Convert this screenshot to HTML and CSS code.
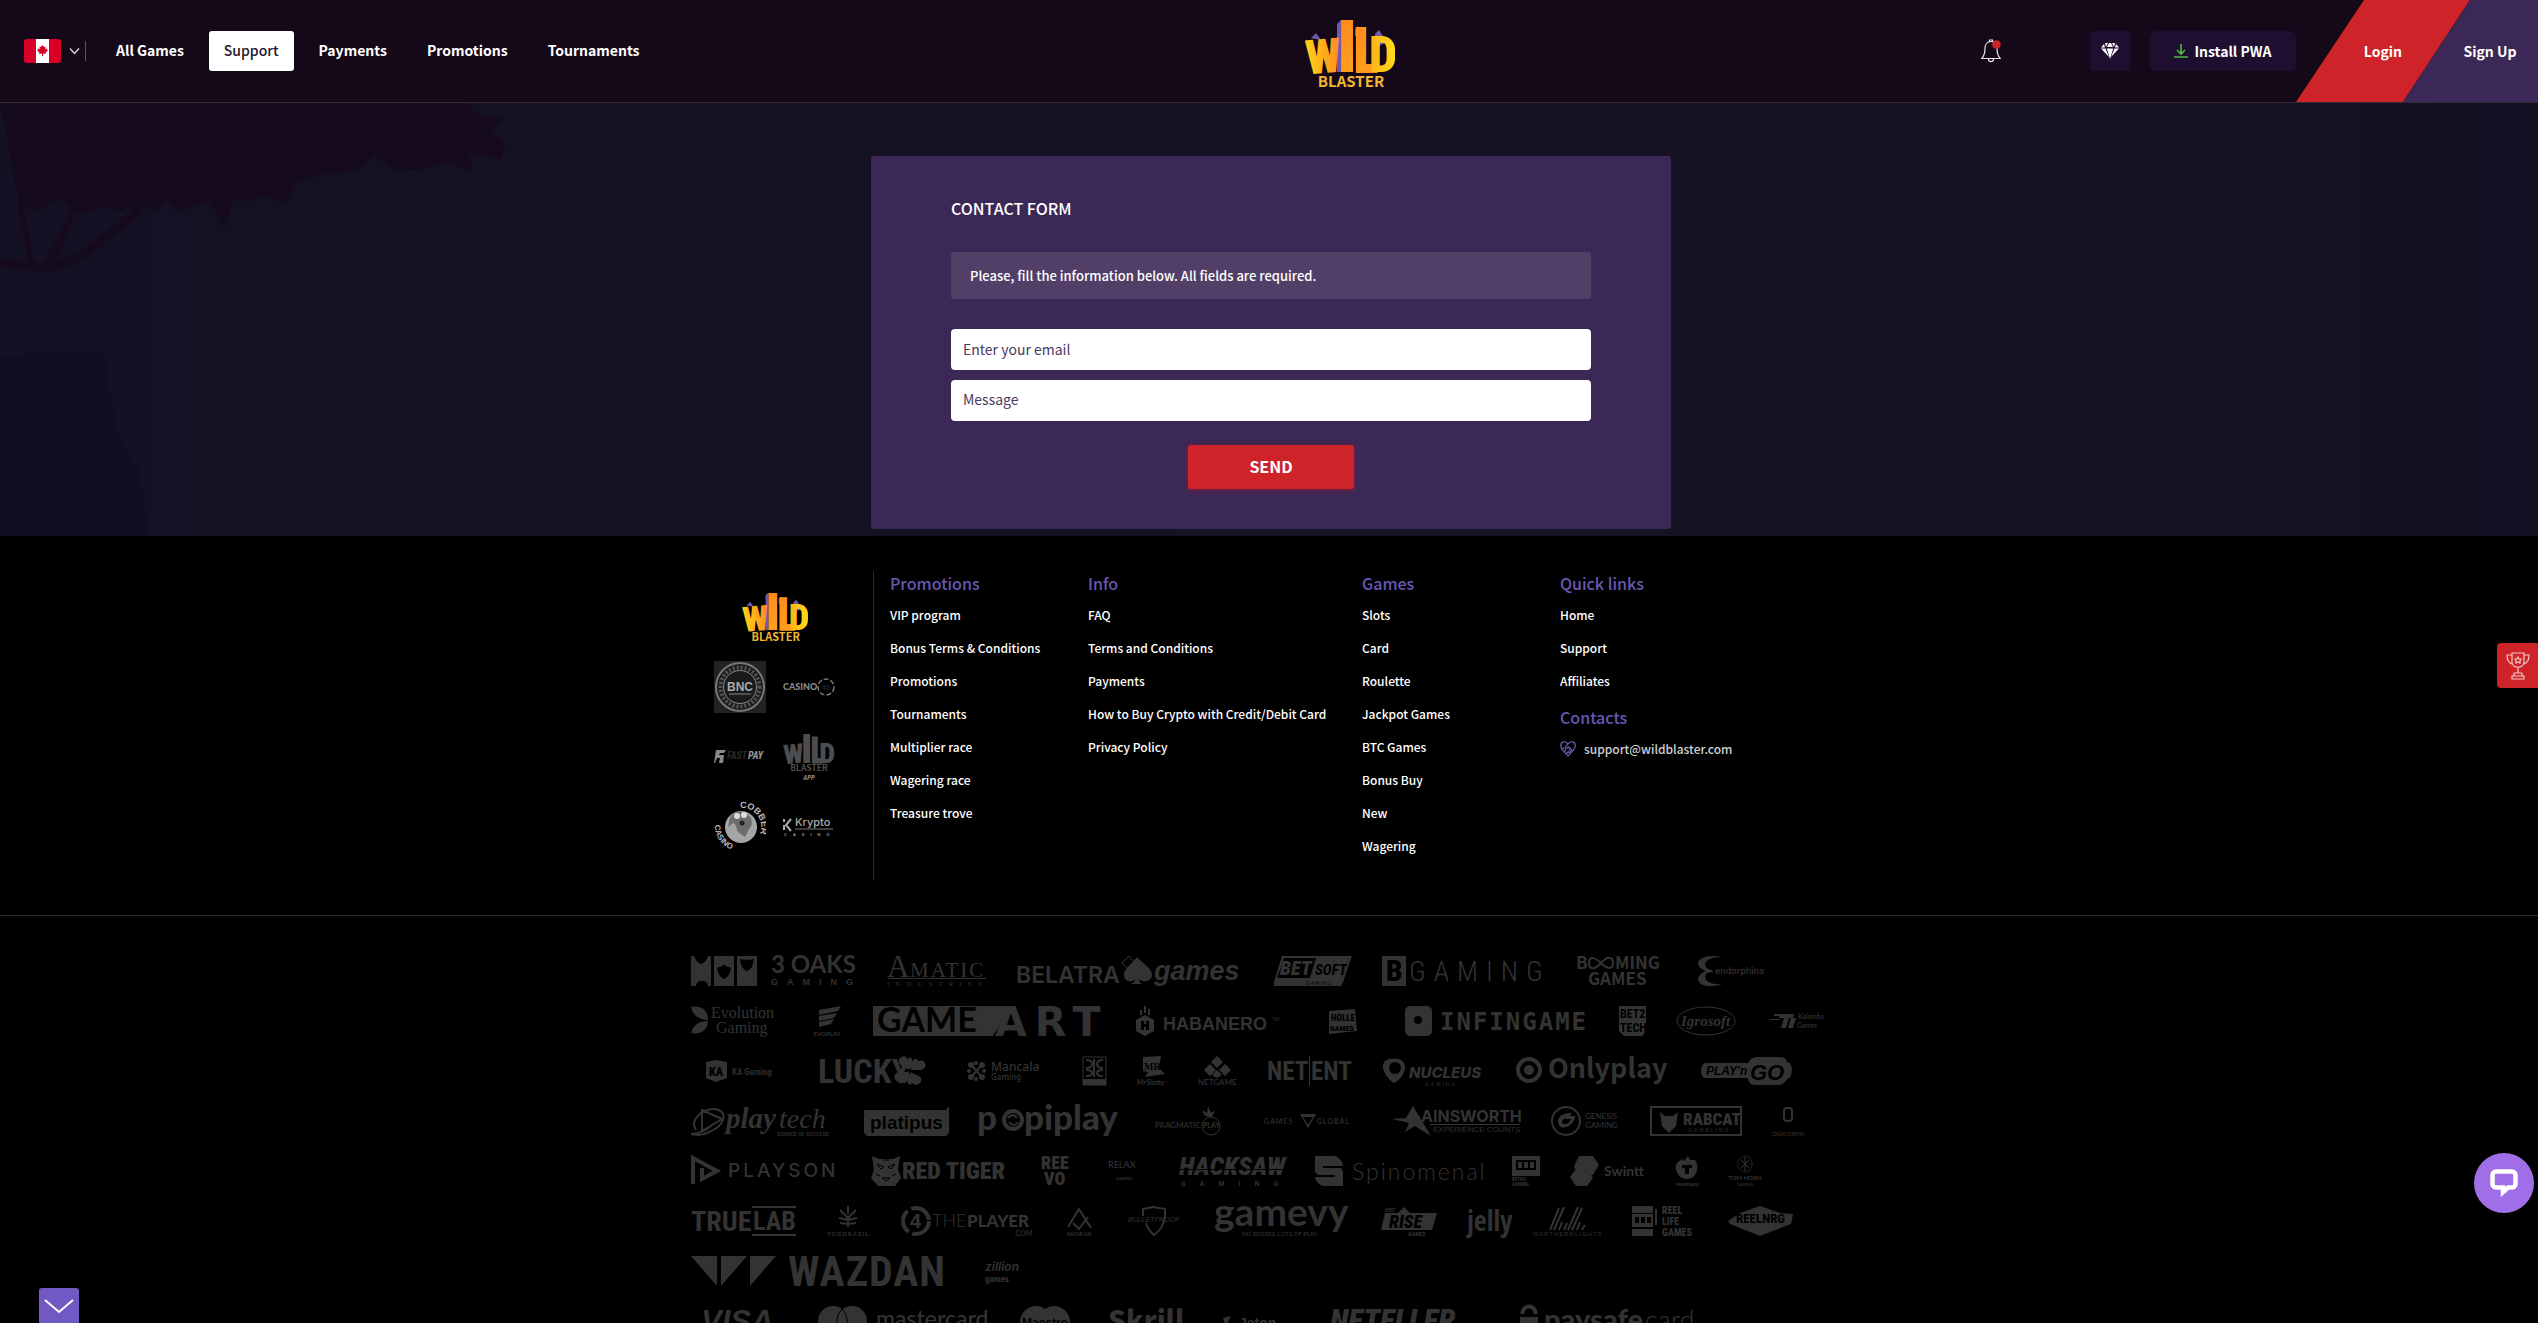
FILE: index.html
```html
<!DOCTYPE html>
<html lang="en">
<head>
<meta charset="utf-8">
<meta name="viewport" content="width=device-width, initial-scale=1">
<title>Support | Wild Blaster</title>
<link rel="stylesheet" href="styles.css">
</head>
<body>
<svg class="defs" aria-hidden="true">
  <defs>
    <linearGradient id="gold" x1="0" x2="1" y1="0" y2="0"><stop offset="0" stop-color="#ffd21a"/><stop offset="1" stop-color="#ff8a1e"/></linearGradient>
    <linearGradient id="amber" x1="0" x2="0" y1="0" y2="1"><stop offset="0" stop-color="#ff8420"/><stop offset="1" stop-color="#ffa51c"/></linearGradient>
    <linearGradient id="sun" x1="0" x2="1" y1="0" y2="0"><stop offset="0" stop-color="#ffae18"/><stop offset="1" stop-color="#ffe01a"/></linearGradient>
    <symbol id="wild" viewBox="0 0 90 74">
      <path d="M6 24l5-5 5 7zM32 10l4-4v52h-4zM70 20l4-4 8 12-12 6zM50 15l3-3v10h-3z" fill="#6d5aa8"/>
      <g class="wild-letters">
        <text x="2" y="59" font-size="48" fill="url(#gold)" transform="rotate(-5 18 59)">W</text>
        <text x="32" y="58" font-size="72" fill="url(#amber)">I</text>
        <text class="tall" x="48" y="58" font-size="62" fill="url(#amber)" stroke="#ff9420" stroke-width="2">L</text>
        <text x="64" y="58" font-size="50" fill="url(#sun)">D</text>
      </g>
      <text class="blaster" x="46" y="73" text-anchor="middle" font-size="15">BLASTER</text>
    </symbol>
  </defs>
</svg>

<div class="page">
  <header class="topbar">
    <button class="country" type="button" aria-label="Country: Canada">
      <svg width="37" height="24" viewBox="0 0 37 24"><rect width="37" height="24" rx="3" fill="#d80027"/><path d="M12 0h13v24H12z" fill="#fff"/><path d="M18.500 6l1.500 2 1.500-.5-.3 2.500 2.300-.5-.6 1.500 1.100.6-2.500 2.200.3 1.200-2.700-.4v2.400h-1.200v-2.400l-2.700.4.3-1.200-2.500-2.200 1.100-.6-.6-1.500 2.300.5-.3-2.500 1.500.5z" fill="#d80027"/></svg>
      <svg width="11" height="8" viewBox="0 0 11 8"><path d="M1 1.500l4.500 5 4.500-5" fill="none" stroke="#ddd" stroke-width="1.300"/></svg>
    </button>
    <nav class="menu">
      <a href="#">All Games</a>
      <a href="#" class="current">Support</a>
      <a href="#">Payments</a>
      <a href="#">Promotions</a>
      <a href="#">Tournaments</a>
    </nav>
    <a class="brand" href="#" aria-label="Wild Blaster"><svg width="90" height="74"><use href="#wild"/></svg></a>
    <div class="tools">
      <button class="bell" type="button" aria-label="Notifications">
        <svg width="20" height="24" viewBox="0 0 20 24"><path d="M8.500 3V1h3v2M10 2.500c-4 0-6 3-6 7C4 15 3 17 .8 19.500h18.400C17 17 16 15 16 9.500c0-4-2-7-6-7zM7.500 20c0 3.500 5 3.500 5 0" fill="none" stroke="#e8e4ea" stroke-width="1.200"/><circle cx="15.500" cy="5.500" r="4.300" fill="#cd2329"/></svg>
      </button>
      <button class="gem" type="button" aria-label="Rewards">
        <svg width="18" height="16" viewBox="0 0 18 16"><path d="M4 0h3L5 4zM8 0h2l2 4H6zM11 0h3l-1 4zM3 1l1 3.500H0zM15 1l3 3.500h-4zM0 5.500h4.500L8 14zM5.800 5.500h6.400L9 16zM13.500 5.500H18L10 14z" fill="#fff"/></svg>
      </button>
      <button class="install" type="button">
        <svg width="14" height="14" viewBox="0 0 14 14"><path d="M7 0v10M3 6l4 4 4-4M0 13h14" fill="none" stroke="#57b947" stroke-width="1.600"/></svg>
        Install PWA
      </button>
      <a class="login" href="#">Login</a>
      <a class="signup" href="#">Sign Up</a>
    </div>
  </header>

  <main class="stage">
    <svg class="scenery" viewBox="0 0 870 433" width="870" height="433" aria-hidden="true">
      <path d="M0 0h465l15 12 22 4-10 12 14 14-6 14-30-6 2 22-20-14-28 8-30 2-20-16-16 16-40 4-20 8-14 20-20-8-10 6-20-2-10 30-14-28-14 4-16 8-14-14-10 14-14-12-20 10-20-4-20 8-22-16-22 12-18-4z" fill="#150b1c"/>
      <path d="M0 160c40 4 60 10 90-14 24-20 46-28 60-60" fill="none" stroke="#150b1c" stroke-width="9"/>
      <path d="M32 164c-2-30-16-50-8-80M46 162c20-40 30-50 38-88M54 158l12-30" fill="none" stroke="#150b1c" stroke-width="6"/>
      <path d="M0 256l32-6 72-2 6 40 10 50 20 30 8 65H0z" fill="#120d21"/>
    </svg>
    <section class="card">
      <h1>CONTACT FORM</h1>
      <p class="hint">Please, fill the information below. All fields are required.</p>
      <form class="contact">
        <input type="email" name="email" placeholder="Enter your email" aria-label="Enter your email">
        <textarea name="message" rows="1" placeholder="Message" aria-label="Message"></textarea>
        <button type="submit">SEND</button>
      </form>
    </section>
  </main>

  <footer class="footer">
    <div class="directory">
      <div class="partners">
        <a href="#" aria-label="Wild Blaster"><svg width="66" height="54"><use href="#wild"/></svg></a>
        <div class="badges">
          <svg width="52" height="52" viewBox="0 0 52 52"><path d="M0 0h52v52H0z" fill="#222"/><circle cx="26" cy="26" r="24" fill="#1c1c1c" stroke="#777" stroke-width="2"/><circle cx="26" cy="26" r="19.500" fill="none" stroke="#555" stroke-width="4" stroke-dasharray="2 2"/><circle cx="26" cy="26" r="16.500" fill="#1a1a1a" stroke="#888"/><text class="sans" x="26" y="30" text-anchor="middle" font-size="12" font-weight="700" fill="#aaa">BNC</text><path d="M15 33h22" stroke="#888"/></svg>
          <svg width="52" height="52" viewBox="0 0 52 52"><text class="lato" x="0" y="29" font-size="9" font-weight="900" fill="#8a8a8a">CASINO</text><circle cx="43" cy="26" r="8" fill="none" stroke="#777" stroke-width="1.500" stroke-dasharray="5 2"/><text class="sans" x="43" y="29" text-anchor="middle" font-size="8" font-weight="700" fill="#222">40</text></svg>
          <svg width="52" height="52" viewBox="0 0 52 52"><path d="M2 20h10l-2 3H6l-1 2h5l-1 8H5l1-5H3l-2 5H0z" fill="#888"/><text class="rc" x="13" y="29" font-size="10" font-style="italic" font-weight="700" fill="#2a2a2a">FAST</text><text class="rc" x="34" y="29" font-size="10" font-style="italic" font-weight="700" fill="#999">PAY</text></svg>
          <svg width="52" height="52" viewBox="0 0 92 92"><g class="wild-letters" fill="#4d4d4d"><text x="2" y="59" font-size="48" transform="rotate(-5 18 59)">W</text><text x="32" y="58" font-size="72">I</text><text class="tall" x="48" y="58" font-size="62" stroke="#4d4d4d" stroke-width="2">L</text><text x="64" y="58" font-size="50">D</text></g><text class="sans7" x="46" y="73" text-anchor="middle" font-size="15" fill="#4d4d4d">BLASTER</text><text class="rc" x="46" y="89" text-anchor="middle" font-size="12" font-style="italic" font-weight="700" fill="#888">APP</text></svg>
          <svg width="52" height="52" viewBox="0 0 52 52"><circle cx="27" cy="28" r="16" fill="#a5a5a5"/><path d="M16 18c4-6 14-8 18-2 6 4 4 12 1 14l-4 8-6-4c-4-6-2-8-6-10l-5 4z" fill="#6d6d6d"/><circle cx="23" cy="17" r="3" fill="#ddd"/><circle cx="30" cy="16" r="3" fill="#ddd"/><circle cx="28" cy="24" r="2.500" fill="#222"/><path id="arcTop" d="M26 9a19 19 0 0 1 16 32" fill="none"/><path id="arcLow" d="M1 26a25 25 0 0 0 18 25" fill="none"/><text class="sans" font-size="9" font-weight="700" fill="#bbb"><textPath href="#arcTop">COBBER</textPath></text><text class="sans" font-size="8" font-weight="700" fill="#bbb"><textPath href="#arcLow">CASINO</textPath></text></svg>
          <svg width="52" height="52" viewBox="0 0 52 52"><path d="M1 20v3M1 26v5M8 20l-5 6 5 6" fill="none" stroke="#aaa" stroke-width="2"/><text class="inter" x="12" y="27" font-size="11" font-weight="500" fill="#aaa">Krypto</text><path d="M12 30h38" stroke="#777"/><text class="sans" x="1" y="37" font-size="4" font-weight="700" fill="#999" letter-spacing="6">CASINO</text></svg>
        </div>
      </div>
      <nav class="links">
        <h2>Promotions</h2>
        <a href="#">VIP program</a><a href="#">Bonus Terms &amp; Conditions</a><a href="#">Promotions</a><a href="#">Tournaments</a><a href="#">Multiplier race</a><a href="#">Wagering race</a><a href="#">Treasure trove</a>
      </nav>
      <nav class="links">
        <h2>Info</h2>
        <a href="#">FAQ</a><a href="#">Terms and Conditions</a><a href="#">Payments</a><a href="#">How to Buy Crypto with Credit/Debit Card</a><a href="#">Privacy Policy</a>
      </nav>
      <nav class="links">
        <h2>Games</h2>
        <a href="#">Slots</a><a href="#">Card</a><a href="#">Roulette</a><a href="#">Jackpot Games</a><a href="#">BTC Games</a><a href="#">Bonus Buy</a><a href="#">New</a><a href="#">Wagering</a>
      </nav>
      <nav class="links">
        <h2>Quick links</h2>
        <a href="#">Home</a><a href="#">Support</a><a href="#">Affiliates</a>
        <h2 class="contacts">Contacts</h2>
        <a class="mail" href="mailto:support@wildblaster.com">
          <svg width="16" height="16" viewBox="0 0 16 16"><path d="M8 3C6-.5 1 0 .8 4.500.6 7 2 8 3 9.500L8 15l5-5.500C14 8 15.500 7 15.200 4.500 15 0 10 -.5 8 3zM8 3L5 6.500c1 1.500 2.500.5 3.500-.5l4.500 4M2 8l2-1M4 10.500L6 8.500M6 13l2-2M9 8.500l2.500 3M8 10.500l2 2" fill="none" stroke="#7a66c4" stroke-width="1.100"/></svg>
          support@wildblaster.com
        </a>
      </nav>
    </div>

    <div class="logo-band">
    <ul class="logos">
      <li><svg width="166" height="30"><path d="M0 0l3 0c2 6 6 8 7 8s6-3 7-8h3v30h-3c0-3-2-5-6-5s-6 2-6 5H0zM23 0h20v30H23zM46 0h20v30H46z"/><path d="M26 12c3-2 5-1 7-4 1 3 4 2 7 4-1 6-3 9-7 11-4-2-6-5-7-11zM49 3c4 1 10 1 14 0-1 7-3 11-7 12-4-1-6-5-7-12z" class="cut"/><text class="mont" x="80" y="17" font-size="24">3 OAKS</text><text class="sans" x="80" y="29" font-size="9" font-weight="700" letter-spacing="9">GAMING</text></svg></li>
      <li><svg width="99" height="30"><text class="serif" x="0" y="21" font-size="31">A</text><text class="serif" x="23" y="21" font-size="21" letter-spacing="2">MATIC</text><path d="M1 22h98v1H1z"/><text class="serif" x="0" y="30" font-size="7" letter-spacing="6">INDUSTRIES</text></svg></li>
      <li><svg width="228" height="30"><text class="inter" x="0" y="27" font-size="23" font-weight="600">BELATRA</text><path d="M121 1c-6 8-13 11-13 18 0 7 8 8 11 4 0 3-2 4-5 5h13c-3-1-4-2-4-5 3 4 13 3 13-4 0-7-9-11-15-18z"/><path d="M113 0l6 7-6 7-7-7z" class="line"/><text class="sans" x="138" y="24" font-size="27" font-weight="700" font-style="italic">games</text></svg></li>
      <li><svg width="78" height="30"><path d="M8 0h70l-9 26H0z"/><path d="M10 2h65l-7 20H3z" class="cut"/><path d="M42 2h33l-7 20H36z"/><text class="rc" x="6" y="19" font-size="20" font-weight="900" font-style="italic">BET</text><text class="rc cut" x="41" y="19" font-size="15" font-weight="700" font-style="italic">SOFT</text><path d="M0 24h70l-3 6H0z"/><text class="sans cut" x="32" y="29" font-size="5" letter-spacing="1">GAMING</text></svg></li>
      <li><svg width="164" height="30"><path d="M0 0h24v30H0z"/><text class="rc cut" x="4" y="25" font-size="29" font-weight="900">B</text><text class="rc" x="27" y="25" font-size="28" font-weight="300" letter-spacing="8">GAMING</text></svg></li>
      <li><svg width="91" height="30"><text class="sans7" x="0" y="13" font-size="17">B</text><path d="M13 7c0-7 6-6 12 0s12 7 12 0-6-7-12 0-12 7-12 0z" class="line2"/><text class="sans7" x="39" y="13" font-size="17">MING</text><text class="sans7" x="12" y="29" font-size="17">GAMES</text></svg></li>
      <li><svg width="73" height="30"><path d="M25 1C12-2 0 2 1 8c1 4 5 5 7 7-2 2-7 4-7 8 0 7 12 9 24 5C12 29 6 24 9 18c1-2 7-1 7-3s-6-1-7-4C6 6 12 1 25 1z"/><text class="inter" x="18" y="18" font-size="9">endorphina</text></svg></li>

      <li><svg width="90" height="30"><path d="M0 1c10-2 17 3 17 13C9 14 2 10 0 1zM0 27c2-8 8-12 17-12 0 9-7 14-17 12z"/><text class="serif" x="20" y="12" font-size="16">Evolution</text><text class="serif" x="25" y="27" font-size="16">Gaming</text></svg></li>
      <li><svg width="32" height="30"><path d="M8 4l22-4-3 5-19 4zM8 10l18-3-3 5-15 3zM8 16l15-3-3 5-12 3z"/><text class="lato" x="16" y="30" text-anchor="middle" font-size="6" font-weight="700">EVOPLAY</text></svg></li>
      <li><svg width="233" height="30"><path d="M0 0h138l-18 30H0z"/><text class="mont cut" x="4" y="26" font-size="34">GAME</text><text class="dejavu" x="122" y="30" font-size="41" letter-spacing="8">ART</text></svg></li>
      <li><svg width="144" height="30"><path d="M0 14l9-5 9 5v11l-9 5-9-5zM8 0h2v7H8zM4 4h2v5H4zM12 3h2v6h-2z"/><path d="M5 15h3v3h2v-3h3v9h-3v-3H8v3H5z" class="cut"/><text class="sans" x="27" y="24" font-size="18" font-weight="700">HABANERO</text><text class="sans" x="136" y="15" font-size="5">TM</text></svg></li>
      <li><svg width="65" height="30"><path d="M19 5l26-2 2 22-28 3z"/><text class="rc cut" x="21" y="15" font-size="9" font-weight="900">HÖLLE</text><text class="rc cut" x="20" y="25" font-size="8" font-weight="900">GAMES</text></svg></li>
      <li><svg width="184" height="30"><rect width="27" height="30" rx="5"/><circle cx="13" cy="14" r="4" class="cut"/><text class="mono" x="35" y="24" font-size="24" letter-spacing="2">INFINGAME</text></svg></li>
      <li><svg width="27" height="30"><path d="M0 0h27v25l-4 5H5l-5-5z"/><text class="rc cut" x="1" y="12" font-size="12" font-weight="700">BET2</text><text class="rc cut" x="1" y="26" font-size="12" font-weight="700">TECH</text></svg></li>
      <li><svg width="62" height="30"><ellipse cx="30" cy="15" rx="29" ry="14" class="line"/><text class="serif" x="5" y="20" font-size="15" font-style="italic" font-weight="700">Igrosoft</text></svg></li>
      <li><svg width="60" height="30"><path d="M6 8h8l-1 2H6zM2 13h9v1H2zM12 8h14l-1 4h-4l-3 10h-5l3-10h-5zM23 12h5l-3 10h-5z"/><text class="lato" x="30" y="13" font-size="7" font-style="italic">Kalamba</text><text class="lato" x="29" y="22" font-size="7" font-style="italic">Games</text></svg></li>

      <li><svg width="97" height="30"><path d="M15 6l10-2 11 2v16l-11 4-10-4z"/><text class="rc cut" x="18" y="20" font-size="12" font-weight="900">KA</text><text class="rc" x="41" y="19" font-size="9">KA Gaming</text></svg></li>
      <li><svg width="106" height="30"><text class="rc" x="0" y="27" font-size="34" font-weight="700">LUCKY</text><g transform="rotate(12 92 15)"><path d="M91 14c-6-2-12-2-12-7s6-7 8-3c3-6 8 0 4 10zM93 14c-3-9 2-16 5-10 4-4 9 0 8 4-1 5-7 4-13 6zM91 16c3 9-2 16-5 10-4 4-9 0-8-4 1-5 7-4 13-6zM93 16c6 2 12 1 12 6s-6 7-8 4c-3 6-8 0-4-10z"/></g></svg></li>
      <li><svg width="98" height="30"><circle cx="17" cy="9" r="3"/><circle cx="28" cy="9" r="3"/><circle cx="17" cy="21" r="3"/><circle cx="28" cy="21" r="3"/><path d="M18 10l10 11M28 9L17 21" class="line2"/><circle cx="22" cy="7" r="2"/><circle cx="22" cy="23" r="2"/><circle cx="15" cy="15" r="2"/><circle cx="30" cy="15" r="2"/><text class="noto" x="37" y="15" font-size="12">Mancala</text><text class="noto" x="37" y="24" font-size="8">Gaming</text></svg></li>
      <li><svg width="25" height="30"><path d="M1 1h23v28H1z" class="line"/><path d="M4 4c8 0 8 8 0 8M21 4c-8 0-8 8 0 8M4 20c8 0 8-6 0-6M21 20c-8 0-8-6 0-6M12 3v18" class="line2"/><path d="M1 23h23v6H1z"/></svg></li>
      <li><svg width="31" height="30"><path d="M6 1l18-1-2 12 6 6-20 3 3-5-5-1z"/><text class="serif cut" x="7" y="14" font-size="10" font-weight="700">MR</text><text class="lato" x="0" y="29" font-size="7" font-weight="700">MrSlotty</text></svg></li>
      <li><svg width="39" height="30"><path d="M19 0l6 6-6 6-6-6zM12 8l6 6-6 6-6-6zM27 8l6 6-6 6-6-6zM19 14l5 5-5 3-5-3z"/><text class="lato" x="0" y="29" font-size="8">NETGAME</text></svg></li>
      <li><svg width="85" height="30"><text class="rc" x="0" y="24" font-size="25" font-weight="700">NET</text><path d="M42 0h1v30h-1z"/><text class="rc" x="44" y="24" font-size="25" font-weight="700">ENT</text></svg></li>
      <li><svg width="104" height="30"><path d="M1 9C2 3 9 2 13 3c5-1 11 3 10 10-2 8-7 12-11 14C7 24 0 16 1 9z"/><circle cx="13" cy="12" r="6" class="cut"/><text class="inter" x="27" y="22" font-size="15" font-weight="800" font-style="italic">NUCLEUS</text><text class="sans" x="43" y="30" font-size="5" letter-spacing="2">GAMING</text></svg></li>
      <li><svg width="155" height="30"><circle cx="13" cy="14" r="11" class="line3"/><circle cx="13" cy="14" r="5"/><text class="sans7" x="32" y="22" font-size="27">Onlyplay</text></svg></li>
      <li><svg width="100" height="30"><path d="M5 7h42c2-4 5-6 9-6h22c6 0 8 3 8 5 7 0 6 17 0 17-2 4-5 6-9 6H54c-4 0-7-3-7-7H5c-7 0-6-15 0-15z"/><text class="sans cut" x="5" y="19" font-size="12" font-weight="700" font-style="italic">PLAY'n</text><text class="sans cut" x="49" y="24" font-size="22" font-weight="700" font-style="italic">GO</text></svg></li>

      <li><svg width="143" height="30"><path d="M11 4l20 9-20 12zM5 24C-2 14 12 2 24 3 38 5 34 20 18 26c-8 4-12 3-18 2 8 0 18-5 22-10" class="line2"/><text class="serif" x="35" y="22" font-size="29" font-weight="700" font-style="italic">play</text><text class="serif" x="88" y="22" font-size="28" font-style="italic">tech</text><text class="rc" x="86" y="30" font-size="6">SOURCE OF SUCCESS</text></svg></li>
      <li><svg width="85" height="30"><path d="M0 4h82l3-4v27l-3 3H3l-3-3z"/><text class="sans cut" x="6" y="23" font-size="19" font-weight="700">platipus</text></svg></li>
      <li><svg width="146" height="30"><text class="mont heavy" x="-2" y="24" font-size="35">p</text><circle cx="34" cy="14" r="9" class="line3"/><path d="M29 12c4-4 6-4 9 0M39 16c-3 4-6 4-9 0" class="line2"/><text class="mont heavy" x="45" y="24" font-size="35">piplay</text></svg></li>
      <li><svg width="70" height="30"><text class="lato" x="0" y="22" font-size="8">PRAGMATIC</text><circle cx="56" cy="20" r="9" class="line"/><path d="M50 10l-3-6 5 3 1-7 3 7 4-3-3 7z"/><text class="lato" x="48" y="22" font-size="7" font-weight="700">PLAY</text></svg></li>
      <li><svg width="107" height="30"><text class="lato" x="9" y="18" font-size="7" letter-spacing="1">GAMES</text><path d="M45 8h16l-8 14zM48 11l5 8 5-8z" fill-rule="evenodd"/><text class="lato" x="62" y="18" font-size="7" letter-spacing="1">GLOBAL</text></svg></li>
      <li><svg width="129" height="30"><path d="M0 13l14-1 7-12 18 30-16-10-10 6 4-9z"/><text class="inter" x="29" y="16" font-size="16" font-weight="700">AINSWORTH</text><path d="M38 18h90v1H38z"/><text class="sans" x="41" y="26" font-size="8">EXPERIENCE COUNTS</text></svg></li>
      <li><svg width="69" height="30"><circle cx="15" cy="15" r="14" class="line2"/><path d="M7 16c0-6 5-9 14-9l-4 5c-4 0-6 2-6 5 3 3 8 0 9-4h-6l3-3h7c0 10-16 17-17 6z"/><text class="lato" x="34" y="13" font-size="8">GENESIS</text><text class="lato" x="34" y="22" font-size="8">GAMING</text></svg></li>
      <li><svg width="92" height="30"><path d="M1 1h90v28H1z" class="line2"/><path d="M10 6l5 4h8l5-4-2 14-7 7-7-7z"/><text class="rc" x="33" y="19" font-size="17" font-weight="900">RABCAT</text><text class="sans" x="38" y="26" font-size="5" letter-spacing="2">GAMBLING</text></svg></li>
      <li><svg width="33" height="30"><rect x="12" y="2" width="8" height="13" rx="3" class="line2"/><text class="lato" x="0" y="30" font-size="6">QUICKSPIN</text></svg></li>

      <li><svg width="150" height="30"><path d="M2 28V2l24 13-15 8V12" class="line3"/><text class="inter" x="37" y="21" font-size="19" letter-spacing="3">PLAYSON</text></svg></li>
      <li><svg width="140" height="30"><path d="M1 0l7 3h14l7-3-2 14 3 8-6 8H7l-7-8 3-8z"/><path d="M6 8l7 3-3 2zM24 8l-7 3 3 2zM11 22h8l-4 3zM12 4h6M5 18l4 2M25 18l-4 2" class="cutline"/><text class="rc" x="31" y="23" font-size="24" font-weight="900">RED TIGER</text></svg></li>
      <li><svg width="31" height="30"><text class="rc" x="0" y="13" font-size="18" font-weight="900">REE</text><text class="rc" x="3" y="29" font-size="18" font-weight="900">VO</text></svg></li>
      <li><svg width="47" height="30"><text class="lato" x="6" y="12" font-size="9">RELAX</text><text class="sans" x="14" y="24" font-size="4" font-weight="700">GAMING</text></svg></li>
      <li><svg width="106" height="30"><text class="rc" x="0" y="19" font-size="26" font-weight="900" font-style="italic">HACKSAW</text><path d="M0 13h106v1H0z" class="cut"/><text class="rc" x="2" y="30" font-size="8" letter-spacing="14">GAMING</text></svg></li>
      <li><svg width="167" height="30"><path d="M0 0h20c5 2 8 6 8 10H8v2h18l2 3v15H8c-5-2-8-6-8-9h20v-2H3l-3-3z"/><text class="lato" x="37" y="24" font-size="23" font-weight="300" letter-spacing="2">Spinomenal</text></svg></li>
      <li><svg width="28" height="30"><path d="M0 0h28v20H0z"/><path d="M4 4h20v10H4z" class="cut"/><path d="M6 6h4v6H6zM12 6h4v6h-4zM18 6h4v6h-4z"/><text class="rc" x="0" y="25" font-size="5" font-weight="700">RETRO</text><text class="rc" x="0" y="30" font-size="5" font-weight="700">GAMING</text></svg></li>
      <li><svg width="76" height="30"><path d="M9 0h14l6 9-6 10h-2l2 3-6 8H6l-6-9 6-8h-1l-1-3z"/><text class="lato" x="34" y="20" font-size="14" font-weight="700">Swintt</text></svg></li>
      <li><svg width="22" height="30"><path d="M6 3l2 2 4-5 2 4 5 0c5 6 2 19-8 19S-3 10 2 6z"/><path d="M6 9h10v3h-3v6H9v-6H6z" class="cut"/><text class="rc" x="11" y="30" text-anchor="middle" font-size="4" font-weight="700">THUNDERKICK</text></svg></li>
      <li><svg width="35" height="30"><ellipse cx="17" cy="8" rx="7" ry="8" stroke-dasharray="2 1" class="line"/><path d="M13 4l8 8M13 12l8-8M17 1v14" class="line"/><text class="lato" x="17" y="24" text-anchor="middle" font-size="6" font-weight="700">TOM HORN</text><text class="lato" x="17" y="30" text-anchor="middle" font-size="4">GAMING</text></svg></li>

      <li><svg width="105" height="30"><text class="rc" x="0" y="25" font-size="28" font-weight="700">TRUE</text><text class="rc" x="62" y="24" font-size="26" font-weight="700">LAB</text><path d="M61 0h44v2H61zM61 28h44v2H61z"/></svg></li>
      <li><svg width="45" height="30"><path d="M22 21v-9M22 12l-8-8M22 12l8-8M22 14l-9-2M22 14l9-2M22 8V0M22 18l-8-1M22 18l8-1" class="line2"/><text class="lato" x="22" y="30" text-anchor="middle" font-size="6" font-weight="700" letter-spacing="1">YGGDRASIL</text></svg></li>
      <li><svg width="133" height="30"><circle cx="15" cy="15" r="13" class="line3" stroke-dasharray="24 4"/><text class="sans" x="9" y="22" font-size="20" font-weight="700">4</text><text class="lato" x="31" y="21" font-size="18" font-weight="300">THE</text><text class="lato" x="66" y="21" font-size="17" font-weight="900">PLAYER</text><text class="lato" x="113" y="30" font-size="7">.COM</text></svg></li>
      <li><svg width="34" height="30"><path d="M4 21L15 3l12 19M9 17l6 6 9-12" class="line2"/><text class="rc" x="15" y="30" text-anchor="middle" font-size="5">AVATAR LUX</text></svg></li>
      <li><svg width="56" height="30"><path d="M15 10V3l10-2 12 2v7c-1 9-5 15-11 19-5-4-7-8-8-12" class="line2"/><text class="sans" x="0" y="16" font-size="7" font-style="italic">BULLETPROOF</text></svg></li>
      <li><svg width="137" height="30"><text class="mont" x="0" y="20" font-size="39">gamevy</text><text class="lato" x="28" y="30" font-size="6">NO BOSSES. LOTS OF PLAY.</text></svg></li>
      <li><svg width="56" height="30"><path d="M4 7h13l6-6 6 6h27l-5 17H0z"/><text class="rc cut" x="8" y="22" font-size="18" font-weight="900" font-style="italic">RISE</text><text class="rc" x="4" y="6" font-size="6" font-weight="700" font-style="italic">HOT</text><text class="rc" x="27" y="30" font-size="6" font-weight="700" font-style="italic">GAMES</text></svg></li>
      <li><svg width="36" height="30"><text class="osc" x="0" y="25" font-size="28" font-weight="700">jelly</text></svg></li>
      <li><svg width="69" height="30"><path d="M17 24L26 2M21 24L31 1M26 24l3-8M31 24l3-7M35 24L45 1M39 24L49 2M44 24l3-8M49 24l3-5" class="line2"/><text class="sans" x="0" y="30" font-size="6" letter-spacing="1">NORTHERNLIGHTS</text></svg></li>
      <li><svg width="66" height="30"><path d="M0 0h21v7H0zM0 8h21v13H0zM0 23h21v7H0zM23 3h2v16h-2z"/><path d="M3 11h4v6H3zM9 11h4v6H9zM15 11h4v6h-4z" class="cut"/><text class="rc" x="30" y="8" font-size="10" font-weight="900">REEL</text><text class="rc" x="30" y="19" font-size="10" font-weight="900">LIFE</text><text class="rc" x="30" y="30" font-size="10" font-weight="900">GAMES</text></svg></li>
      <li><svg width="65" height="30"><path d="M0 15l12-8 20-7 20 7 13 1-2 10-31 12L2 18z"/><text class="rc cut" x="8" y="17" font-size="13" font-weight="700">REELNRG</text></svg></li>

      <li><svg width="264" height="30"><path d="M0 0h26v30zM30 0h26L30 30zM59 0h26L59 30z"/><text class="rc" x="97" y="30" font-size="42" font-weight="700" letter-spacing="1">WAZDAN</text></svg></li>
      <li><svg width="40" height="30"><text class="inter" x="0" y="15" font-size="12" font-weight="600" font-style="italic">zillion</text><text class="rc" x="0" y="26" font-size="9" font-weight="700">games</text></svg></li>
    </ul>
    <ul class="logos">
      <li><svg width="97" height="30"><text class="sans" x="10" y="26" font-size="31" font-weight="700" font-style="italic">VISA</text></svg></li>
      <li><svg width="170" height="30"><circle cx="15" cy="15" r="15"/><circle cx="34" cy="15" r="15"/><path d="M24 3c-7 8-7 16 0 24 7-8 7-16 0-24z" class="cutline"/><text class="lato" x="58" y="21" font-size="23">mastercard</text></svg></li>
      <li><svg width="54" height="30"><circle cx="18" cy="16" r="16"/><circle cx="36" cy="16" r="16"/><text class="sans cut" x="4" y="21" font-size="12" font-weight="700">Maestro</text></svg></li>
      <li><svg width="85" height="30"><text class="sans7 black" x="6" y="25" font-size="28">Skrill</text></svg></li>
      <li><svg width="63" height="30"><path d="M6 12l8-2-3 6 2 6H4l4-4z"/><text class="sans" x="22" y="22" font-size="14" font-weight="700">Jeton</text></svg></li>
      <li><svg width="180" height="30"><text class="rc" x="20" y="25" font-size="31" font-weight="900" font-style="italic">NETELLER</text></svg></li>
      <li><svg width="177" height="30"><path d="M2 8c2-10 12-10 14 0" class="line3"/><path d="M0 11h18v19H0z"/><text class="mont heavy" x="24" y="24" font-size="29">paysafe</text><text class="lato" x="125" y="24" font-size="27" font-weight="300">card</text></svg></li>
    </ul>
    </div>
  </footer>
</div>

<button class="trophy" type="button" aria-label="Tournaments">
  <svg width="24" height="28" viewBox="0 0 24 28"><path d="M6 1h12v9c0 7-12 7-12 0zM6 3H1c0 6 2 8 5 9M18 3h5c0 6-2 8-5 9M12 15v6M8 21h8v3H8zM6 24h12v3H6zM12 5l1 2h2l-1 2v2l-2-1-2 1V9L9 7h2z" fill="none" stroke="#f3c9ca" stroke-width="1.200"/></svg>
</button>
<button class="chat" type="button" aria-label="Open chat">
  <svg width="28" height="28" viewBox="0 0 28 28"><path d="M6 2.500h16a3.500 3.500 0 0 1 3.500 3.500v9a3.500 3.500 0 0 1-3.500 3.500h-4l-5 4.500v-4.500H6A3.500 3.500 0 0 1 2.500 15V6A3.500 3.500 0 0 1 6 2.500z" fill="none" stroke="#fff" stroke-width="4.500"/></svg>
</button>
<button class="down" type="button" aria-label="Scroll down">
  <svg width="30" height="16" viewBox="0 0 30 16"><path d="M1 2l14 12L29 2" fill="none" stroke="#fff" stroke-width="2"/></svg>
</button>
</body>
</html>
```
FILE: styles.css
```css
* { box-sizing: border-box; }
body {
  margin: 0;
  background: #000;
  color: #fff;
  font: 500 14px/20px "Noto Sans CJK SC", "Noto Sans", sans-serif;
}
a { color: inherit; text-decoration: none; }
button, input, textarea { font: inherit; border: 0; margin: 0; }
button { color: inherit; cursor: pointer; padding: 0; background: none; }
svg { display: block; flex: none; }
.defs { position: absolute; width: 0; height: 0; }

.page { height: 100vh; overflow: hidden auto; scrollbar-width: none; }

/* Header */
.topbar {
  display: flex;
  align-items: center;
  height: 103px;
  padding-left: 24px;
  background: #150818;
  border-bottom: 1px solid #332a38;
}
.country {
  display: flex;
  align-items: center;
  gap: 8px;
  height: 20px;
  padding-right: 5px;
  border-right: 1px solid #5c5460;
}
.menu { display: flex; gap: 10px; margin-left: 15px; }
.menu a { padding: 0 15px 2px; line-height: 38px; font-weight: 700; border-radius: 3px; }
.menu .current { background: #fff; color: #20162c; font-weight: 500; }
.brand { margin-left: auto; padding-left: 64px; }
.tools { display: flex; align-items: center; margin-left: auto; font-weight: 700; }
.bell { margin-right: 89px; }
.gem, .install {
  display: flex;
  align-items: center;
  justify-content: center;
  height: 40px;
  background: #1e0f30;
}
.gem { width: 40px; margin-right: 20px; border-radius: 3px; }
.install { width: 146px; gap: 6px; border-radius: 6px; font-weight: 700; }
.login, .signup { line-height: 102px; text-align: center; }
.login {
  width: 174px;
  background: #cd2329;
  clip-path: polygon(68px 0, 100% 0, 107px 100%, 0 100%);
}
.signup {
  width: 135px;
  margin-left: -67px;
  padding-left: 39px;
  background: #3c2856;
  clip-path: polygon(67px 0, 100% 0, 100% 100%, 0 100%);
}

/* Contact form */
.stage {
  position: relative;
  padding: 53px 20px 7px 24px;
  background: linear-gradient(90deg, #131123, #151223 40%, #161423 75%, #141023);
}
.scenery { position: absolute; left: 0; top: 0; }
.card {
  position: relative;
  max-width: 800px;
  margin: 0 auto;
  padding: 42px 80px 40px;
  background: #3c2856;
  border-radius: 3px;
}
.card h1 { margin: 0 0 34px; font-size: 16px; line-height: 20px; font-weight: 500; }
.hint {
  margin: 0 0 30px;
  padding: 0 19px;
  font-size: 13px;
  line-height: 47px;
  background: #513f68;
  border-radius: 3px;
}
.contact { display: flex; flex-direction: column; gap: 10px; }
.contact input, .contact textarea {
  height: 41px;
  padding: 9px 12px 11px;
  font-weight: 400;
  background: #fff;
  border-radius: 4px;
  resize: none;
  overflow: hidden;
}
.contact ::placeholder { color: #4a3a60; opacity: 1; }
.contact button {
  align-self: center;
  width: 166px;
  height: 44px;
  margin-top: 14px;
  padding-bottom: 2px;
  font-size: 16px;
  font-weight: 700;
  background: #cd2329;
  border-radius: 3px;
  box-shadow: 0 1px 4px #8c1d33;
}

/* Footer directory */
.footer { background: #000; }
.directory {
  display: grid;
  grid-template-columns: 198px 198px 274px 198px 1fr;
  max-width: 1186px;
  margin: 0 auto;
  padding: 35px 0;
}
.partners {
  display: flex;
  flex-direction: column;
  align-items: center;
  gap: 19px;
  min-height: 309px;
  padding-top: 17px;
  border-right: 1px solid #2b2b2b;
}
.badges { display: grid; grid-template-columns: 52px 52px; gap: 17px; }
.links {
  display: flex;
  flex-direction: column;
  align-items: flex-start;
  padding-left: 16px;
  font-size: 12px;
  line-height: 33px;
}
.links h2 { margin: 0; padding-bottom: 2px; font-size: 16px; line-height: 25px; font-weight: 500; color: #6a57b5; }
.links .contacts { margin-top: 8px; }
.mail { display: flex; align-items: center; gap: 8px; color: #d0d0d0; }

/* Provider and payment logos */
.logo-band { padding-top: 40px; border-top: 1px solid #2b2b2b; }
.logos {
  display: flex;
  flex-wrap: wrap;
  gap: 20px 30px;
  max-width: 1156px;
  margin: 0 auto;
  padding: 0 0 20px;
  list-style: none;
}
.logos svg { fill: #333; overflow: visible; }
.logos .cut { fill: #000; }
.logos .cutline { fill: none; stroke: #000; stroke-width: 1px; }
.logos .line { fill: none; stroke: #333; stroke-width: 1px; }
.logos .line2 { fill: none; stroke: #333; stroke-width: 2px; }
.logos .line3 { fill: none; stroke: #333; stroke-width: 4px; }
.sans { font-family: "Liberation Sans", sans-serif; }
.sans7 { font-family: "Noto Sans CJK SC", sans-serif; font-weight: 700; }
.serif { font-family: "Liberation Serif", serif; }
.lato { font-family: Lato, sans-serif; }
.mont { font-family: Lato, sans-serif; font-weight: 700; }
.heavy, .black { font-weight: 900; }
.inter { font-family: Inter, sans-serif; }
.noto { font-family: "Noto Sans", sans-serif; }
.mono { font-family: "DejaVu Sans Mono", monospace; font-weight: 700; }
.dejavu { font-family: "DejaVu Sans", sans-serif; font-weight: 700; }
.rc { font-family: "Roboto Condensed", Roboto, sans-serif; }
.osc, .wild-letters .tall { font-family: "Open Sans Condensed", "Open Sans", sans-serif; font-weight: 700; }
.wild-letters { font-family: "Roboto Condensed", Roboto, sans-serif; font-weight: 900; }
.blaster { font-family: "Noto Sans CJK SC", sans-serif; font-weight: 700; fill: #f2b632; }

/* Floating buttons */
.trophy, .chat, .down { position: fixed; display: flex; align-items: center; justify-content: center; }
.trophy { right: 0; top: 643px; width: 41px; height: 45px; background: #cd2329; border-radius: 4px 0 0 4px; }
.chat { right: 4px; bottom: 110px; width: 60px; height: 60px; background: #a06ee6; border-radius: 50%; }
.down { left: 39px; bottom: 0; width: 40px; height: 35px; background: #7059c2; border-radius: 3px 3px 0 0; }
```
